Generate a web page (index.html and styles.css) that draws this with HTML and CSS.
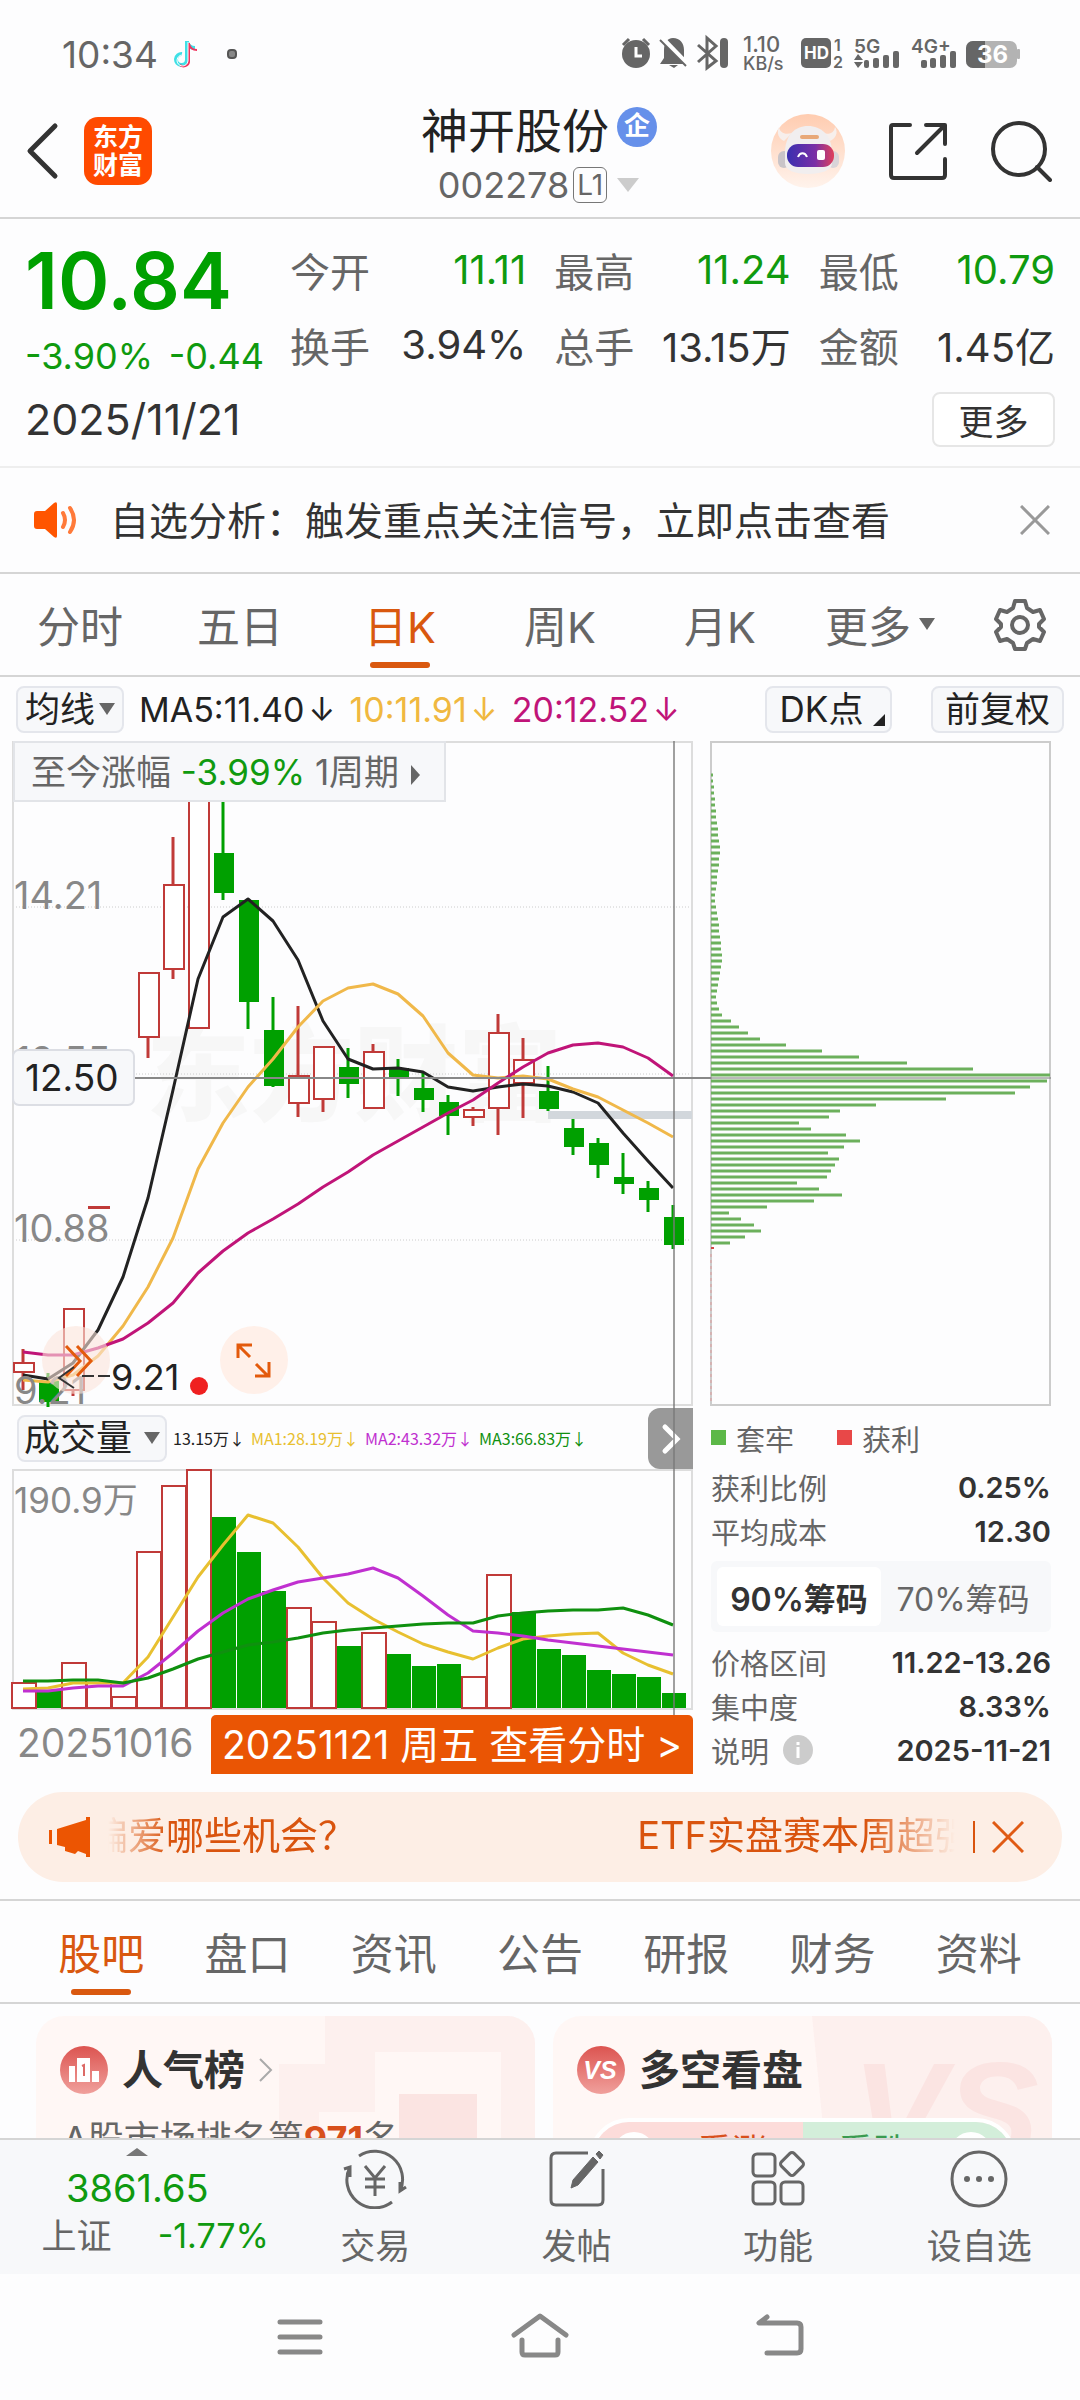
FILE: index.html
```html
<!DOCTYPE html>
<html lang="zh-CN">
<head>
<meta charset="utf-8">
<meta name="viewport" content="width=device-width">
<title>神开股份 002278</title>
<link rel="stylesheet" href="styles.css">
</head>
<body>
<div class="app">
  <div class="status">
    <span class="clock">10:34</span>
    <svg class="tiktok" viewBox="0 0 24 30" width="24" height="30" fill="none" stroke-width="4">
      <path d="M13 2v19a5.500 5.500 0 1 1-5-6M13 3c1 4 4 6 8 6" stroke="#3ee0e6"/>
      <path d="M15 4v19a5.500 5.500 0 0 1-9 3M15 5c1 4 4 6 8 6" stroke="#f0355f" stroke-width="2"/>
      <path d="M14 3v19a5.500 5.500 0 1 1-5-6" stroke="#fff" stroke-width="1"/>
    </svg>
    <svg class="dot" viewBox="0 0 10 10" width="10" height="10"><rect x="1" y="1" width="8" height="8" rx="3" fill="#888" stroke="#555" stroke-width="2"/></svg>
    <svg class="signals" viewBox="620 34 402 42" width="402" height="42" fill="#666">
      <circle cx="636" cy="55" r="14"/><path d="M623 46l6-6M643 40l6 6" stroke="#666" stroke-width="3"/><path d="M636 48v9h6" stroke="#fff" stroke-width="3" fill="none"/>
      <path d="M673 39c7 0 11 5 11 12v8l4 6h-28l4-6v-8c0-7 3-12 9-12zM669 66h9l-4 3z"/>
      <path d="M662 39l27 28" stroke="#fff" stroke-width="5"/><path d="M660 41l26 26" stroke="#666" stroke-width="2"/>
      <path d="M698 46l18 16-9 7V39l9 8-18 16" fill="none" stroke="#666" stroke-width="3"/><rect x="720" y="39" width="8" height="30" rx="4"/>
      <text x="743" y="53" font-size="22" font-weight="500">1.10</text><text x="743" y="71" font-size="18" font-weight="500">KB/s</text>
      <rect x="801" y="39" width="30" height="30" rx="5"/><text x="804" y="60" font-size="17" font-weight="700" fill="#fff">HD</text>
      <text x="834" y="52" font-size="16" font-weight="600">1</text><text x="833" y="69" font-size="16" font-weight="600">2</text>
      <text x="854" y="54" font-size="19" font-weight="600">5G</text><text x="911" y="54" font-size="19" font-weight="600">4G+</text>
      <path d="M854 61l4-6 5 6zM854 63l4 6 5-6z"/>
      <g><rect x="864" y="61" width="5" height="8" rx="2"/><rect x="873" y="59" width="6" height="10" rx="2"/><rect x="883" y="56" width="6" height="13" rx="2"/><rect x="893" y="52" width="6" height="17" rx="2"/></g>
      <g><rect x="921" y="61" width="6" height="8" rx="2"/><rect x="930" y="59" width="6" height="10" rx="2"/><rect x="940" y="56" width="6" height="13" rx="2"/><rect x="950" y="52" width="6" height="17" rx="2"/></g>
      <rect x="966" y="42" width="51" height="27" rx="7" fill="#b3b3b3"/><path d="M985 42v27h-12a7 7 0 0 1-7-7V49a7 7 0 0 1 7-7z"/><rect x="1017" y="50" width="3" height="10" rx="1" fill="#b3b3b3"/>
      <text x="977" y="64" font-size="24" font-weight="700" fill="#fff">36</text>
    </svg>
  </div>

  <header class="header">
    <div class="header-left">
      <button class="icon-btn" aria-label="返回"><svg viewBox="0 0 34 60" width="34" height="60" fill="none" stroke="#333" stroke-width="5" stroke-linecap="round" stroke-linejoin="round"><path d="M29 5L4 30l25 25"/></svg></button>
      <a class="logo" href="#home"><span>东方</span><span>财富</span></a>
    </div>
    <div class="title">
      <h1>神开股份 <span class="badge">企</span></h1>
      <p class="code">002278 <span class="level">L1</span><svg viewBox="0 0 24 16" width="24" height="16"><path d="M1 1h22L12 15z" fill="#ccc"/></svg></p>
    </div>
    <div class="header-right">
      <button class="icon-btn" aria-label="智能助手">
        <svg viewBox="0 0 76 76" width="76" height="76">
          <defs>
            <linearGradient id="halo" x2="0" y2="1"><stop stop-color="#ffccb0"/><stop offset="1" stop-color="#fff3ec"/></linearGradient>
            <linearGradient id="visor"><stop stop-color="#3a30b0"/><stop offset=".6" stop-color="#7a2fa6"/><stop offset="1" stop-color="#e0405a"/></linearGradient>
          </defs>
          <circle cx="38" cy="38" r="37" fill="url(#halo)"/>
          <path d="M9 14c-3 6 0 12 5 14l8-8c-7 2-12 0-13-6zM65 14c4 6 0 12-5 14l-8-8c8 2 12 0 13-6z" fill="#f7efec"/>
          <rect x="8" y="38" width="12" height="17" rx="6" fill="#c9c4c8"/><rect x="57" y="38" width="12" height="17" rx="6" fill="#d9d4d8"/>
          <path d="M15 40c0-18 10-27 23-27s24 9 24 27v10c0 7-10 11-24 11s-23-4-23-11z" fill="#f1eeef"/>
          <rect x="17" y="31" width="47" height="23" rx="11" fill="url(#visor)"/><rect x="30" y="22" width="19" height="4" rx="2" fill="#e8a878"/>
          <path d="M28 44c2-5 7-5 9 0" fill="none" stroke="#fff" stroke-width="2"/><rect x="47" y="37" width="8" height="10" rx="2" fill="#fff"/>
        </svg>
      </button>
      <button class="icon-btn" aria-label="分享"><svg viewBox="0 0 60 60" width="60" height="60" fill="none" stroke="#333" stroke-width="4" stroke-linecap="round" stroke-linejoin="round"><path d="M22 4H5q-2 0-2 2v48q0 3 3 3h48q3 0 3-3V38M38 4h19v19M56 5L29 32"/></svg></button>
      <button class="icon-btn" aria-label="搜索"><svg viewBox="0 0 62 62" width="62" height="62" fill="none" stroke="#333" stroke-width="4" stroke-linecap="round"><circle cx="29" cy="29" r="26"/><path d="M47 47l13 13"/></svg></button>
    </div>
  </header>

  <main class="content">
    <section class="quote">
      <div class="quote-grid">
        <div>
          <div class="price">10.84</div>
          <div class="change"><span>-3.90%</span><span>-0.44</span></div>
        </div>
        <dl class="stats">
          <div><dt>今开</dt><dd class="down">11.11</dd></div>
          <div><dt>最高</dt><dd class="down">11.24</dd></div>
          <div><dt>最低</dt><dd class="down">10.79</dd></div>
          <div><dt>换手</dt><dd>3.94%</dd></div>
          <div><dt>总手</dt><dd>13.15万</dd></div>
          <div><dt>金额</dt><dd>1.45亿</dd></div>
        </dl>
      </div>
      <div class="quote-foot"><time>2025/11/21</time><button class="more">更多</button></div>
    </section>

    <section class="notice">
      <svg viewBox="0 0 46 38" width="46" height="38" fill="#ff5500"><path d="M1 13q0-3 3-3h8L21 2q3-2 3 1v32q0 3-3 1l-9-8H4q-3 0-3-3z"/><path d="M30 12q4 7 0 14M37 7q8 12 0 24" fill="none" stroke="#ff7a3a" stroke-width="4" stroke-linecap="round"/></svg>
      <p>自选分析：触发重点关注信号，立即点击查看</p>
      <button class="icon-btn" aria-label="关闭"><svg viewBox="0 0 30 30" width="30" height="30" stroke="#999" stroke-width="3"><path d="M1 1l28 28M29 1L1 29"/></svg></button>
    </section>

    <nav class="periods">
      <a href="#minute">分时</a><a href="#five">五日</a><a class="active" href="#day">日K</a><a href="#week">周K</a><a href="#month">月K</a><a href="#more">更多<i class="caret"></i></a>
      <button class="icon-btn" aria-label="设置"><svg viewBox="0 0 54 54" width="54" height="54" fill="none" stroke="#666" stroke-width="4" stroke-linejoin="round"><path d="M22 3h10l2 7 6 4 7-2 4 9-5 5v3l5 5-4 9-7-2-6 4-2 6H22l-2-6-6-4-7 2-4-9 5-5v-3l-5-5 4-9 7 2 6-4z"/><circle cx="27" cy="27" r="8"/></svg></button>
    </nav>

    <div class="toolbar">
      <button class="chip">均线<i class="caret"></i></button>
      <span class="ma">MA5:11.40<b>↓</b></span><span class="ma gold">10:11.91<b>↓</b></span><span class="ma rose">20:12.52<b>↓</b></span>
      <button class="chip dk">DK点<i class="corner"></i></button>
      <button class="chip wide">前复权</button>
    </div>

    <section class="charts">
      <div class="chart-col">
        <div class="kline">
          <svg viewBox="13 741 680 665" role="img" aria-label="日K线">
            <text x="146" y="1113" font-size="104" font-weight="900" fill="#f7f7f7">东方财富</text>
            <path d="M13 907h679M13 1074h679M13 1240h679" stroke="#ccc" stroke-dasharray="1 2"/>
            <rect x="13" y="742" width="679" height="663" fill="none" stroke="#ddd" stroke-width="2"/>
            <path d="M548 1115h144" stroke="#d2d7dc" stroke-width="8"/>
            <text class="axis" x="15" y="1074">12.55</text>
            <g id="candles"></g>
            <g id="averages" class="lines"></g>
            <text class="axis" x="14" y="909">14.21</text>
            <text class="axis" x="14" y="1242">10.88</text>
            <text class="axis" x="14" y="1404">9.21</text>
            <circle cx="76" cy="1360" r="34" fill="#fbe5da" opacity=".6"/><circle cx="254" cy="1360" r="34" fill="#fff0e9"/>
            <path d="M66 1346l14 15-14 15M77 1346l14 15-14 15" fill="none" stroke="#e35a0c" stroke-width="3"/>
            <path d="M74 1388l-15-10 15-11M82 1376h12M98 1376h12" fill="none" stroke="#333" stroke-width="2"/>
            <text x="111" y="1390" font-size="36" fill="#222">9.21</text>
            <circle cx="199" cy="1386" r="9" fill="#ef2020"/>
            <path d="M250 1357l-12-12M238 1358v-13h14M256 1364l12 12M269 1362v14h-14" fill="none" stroke="#e35a0c" stroke-width="3"/>
            <path d="M134 1078h577" stroke="#888" stroke-width="2"/>
            <rect x="13" y="1050" width="121" height="55" rx="6" fill="#f7f8fa" stroke="#dcdee4" stroke-width="2"/>
            <text x="25" y="1091" font-size="37" fill="#222">12.50</text>
          </svg>
          <button class="range">至今涨幅 <span class="down">-3.99%</span> 1周期<i></i></button>
        </div>
        <div class="vol-head">
          <button class="chip vol">成交量<i class="caret"></i></button>
          <span>13.15万↓</span><span class="c1">MA1:28.19万↓</span><span class="c2">MA2:43.32万↓</span><span class="c3">MA3:66.83万↓</span>
          <button class="side" aria-label="收起"><svg viewBox="0 0 20 32" width="20" height="32" fill="none" stroke="#fff" stroke-width="5" stroke-linecap="round"><path d="M4 4l12 12L4 28"/></svg></button>
        </div>
        <svg viewBox="13 1470 680 239" role="img" aria-label="成交量">
          <rect x="13" y="1470" width="679" height="239" fill="none" stroke="#ddd" stroke-width="2"/>
          <g id="volumes"></g>
          <g id="volume-averages" class="lines"></g>
          <text x="14" y="1513" font-size="35" fill="#888">190.9万</text>
        </svg>
        <div class="dates"><span>20251016</span><button>20251121 周五 查看分时 &gt;</button></div>
        <i class="crosshair"></i>
      </div>

      <div class="chip-col">
        <svg viewBox="711 741 340 665" role="img" aria-label="筹码分布">
          <rect x="711" y="742" width="339" height="663" fill="none" stroke="#ccc" stroke-width="2"/>
          <path id="chips" stroke="#6cb05c" stroke-width="3"/>
          <path d="M711 1248h3" stroke="#d04848" stroke-width="2"/><path d="M711 1254v150" stroke="#d99" stroke-dasharray="3 3"/>
          <path d="M711 1078h340" stroke="#777"/>
        </svg>
        <div class="legend"><span class="green">套牢</span><span class="red">获利</span></div>
        <dl class="facts"><div><dt>获利比例</dt><dd>0.25%</dd></div><div><dt>平均成本</dt><dd>12.30</dd></div></dl>
        <div class="segment"><button class="on">90%筹码</button><button>70%筹码</button></div>
        <dl class="facts"><div><dt>价格区间</dt><dd>11.22-13.26</dd></div><div><dt>集中度</dt><dd>8.33%</dd></div><div><dt>说明 <svg viewBox="0 0 30 30" width="30" height="30"><circle cx="15" cy="15" r="15" fill="#ccc"/><path d="M15 12v11M15 7v3" stroke="#fff" stroke-width="3"/></svg></dt><dd>2025-11-21</dd></div></dl>
      </div>
    </section>

    <section class="promo">
      <svg viewBox="0 0 46 40" width="46" height="40" fill="#ec5502"><path d="M1 13h3v14H1zM9 12L38 3V0h4v40h-4v-3l-8-3-3 3-10-3v-4l-8-2z"/></svg>
      <div class="marquee"><span>偏爱哪些机会？</span><span>ETF实盘赛本周超强</span></div>
      <button class="icon-btn" aria-label="关闭"><svg viewBox="0 0 32 32" width="32" height="32" stroke="#e05a14" stroke-width="3"><path d="M1 1l30 30M31 1L1 31"/></svg></button>
    </section>

    <nav class="sections">
      <a class="active" href="#bar">股吧</a><a href="#panel">盘口</a><a href="#news">资讯</a><a href="#notice">公告</a><a href="#report">研报</a><a href="#finance">财务</a><a href="#info">资料</a>
    </nav>

    <section class="cards">
      <article class="card">
        <svg class="card-art" viewBox="0 0 300 200" width="300" height="200"><path d="M90 0h210v200H266V36H140v60H84v104H44V48h46z" fill="#fdeeec" opacity=".8"/><path d="M164 78h78v122h-78z" fill="#fbe4e2"/></svg>
        <h2><svg viewBox="0 0 48 48" width="48" height="48"><defs><linearGradient id="red" x2="0" y2="1"><stop stop-color="#dc5450"/><stop offset="1" stop-color="#f0a09c"/></linearGradient></defs><circle cx="24" cy="24" r="24" fill="url(#red)"/><path d="M9 20h6v16H9zM17 12h13v24H17zM32 25h7v11h-7z" fill="#fff"/><path d="M22 20l2-1v11" fill="none" stroke="#dc6a66" stroke-width="2"/></svg>人气榜<svg viewBox="0 0 14 24" width="14" height="24" fill="none" stroke="#aaa" stroke-width="2"><path d="M1 1l11 11L1 23"/></svg></h2>
        <p>A股市场排名第<b>971</b>名</p>
      </article>
      <article class="card">
        <svg class="card-art" viewBox="0 0 300 200" width="300" height="200"><path d="M60 0h240v200H80z" fill="#fdeeec" opacity=".8"/><text class="versus" x="100" y="144" font-size="140" fill="#fbe4e2">VS</text></svg>
        <h2><svg viewBox="0 0 48 48" width="48" height="48"><circle cx="24" cy="24" r="24" fill="url(#red)"/><text class="versus" x="23" y="33" font-size="25" text-anchor="middle" fill="#fff">VS</text></svg>多空看盘</h2>
        <div class="vote"><button class="up">看涨</button><button class="dn">看跌</button></div>
      </article>
    </section>
  </main>

  <footer class="tabbar">
    <a class="index" href="#sh"><i></i><strong>3861.65</strong><span>上证 <em>-1.77%</em></span></a>
    <a href="#trade"><svg viewBox="0 0 64 60" width="64" height="60" fill="none" stroke="#666" stroke-width="3"><path d="M16 7a28 28 0 0 1 41 35M49 53A28 28 0 0 1 7 18M1 20l6-2v10M63 38l-6 4v-9M22 17l10 12 10-12M32 29v18M22 30h20M22 38h20"/></svg>交易</a>
    <a href="#post"><svg viewBox="0 0 60 60" width="60" height="60" fill="none" stroke="#666" stroke-width="3"><path d="M41 4H9q-5 0-5 5v42q0 5 5 5h42q5 0 5-5V20"/><path d="M24 39l2-8L46 8l5 5-20 23zM49 5l3-3 4 4-3 4z" fill="#666" stroke-width="1"/></svg>发帖</a>
    <a href="#features"><svg viewBox="0 0 60 60" width="60" height="60" fill="none" stroke="#666" stroke-width="3"><rect x="5" y="5" width="22" height="22" rx="4"/><rect x="5" y="33" width="22" height="22" rx="4"/><rect x="33" y="33" width="22" height="22" rx="4"/><rect x="35" y="6" width="18" height="18" rx="3" transform="rotate(45 44 15)"/></svg>功能</a>
    <a href="#watch"><svg viewBox="0 0 60 60" width="60" height="60" fill="none" stroke="#666" stroke-width="3"><circle cx="30" cy="30" r="27"/><g fill="#666" stroke="none"><circle cx="18" cy="30" r="3"/><circle cx="30" cy="30" r="3"/><circle cx="42" cy="30" r="3"/></g></svg>设自选</a>
  </footer>
  <nav class="system">
    <button class="icon-btn" aria-label="菜单"><svg viewBox="0 0 60 48" width="60" height="48" stroke="#888" stroke-width="5" stroke-linecap="round"><path d="M10 9h40M10 24h40M10 39h40"/></svg></button>
    <button class="icon-btn" aria-label="主页"><svg viewBox="0 0 60 48" width="60" height="48" fill="none" stroke="#888" stroke-width="5" stroke-linecap="round" stroke-linejoin="round"><path d="M4 22L30 3l26 19M12 27v12q0 3 3 3h30q3 0 3-3V27"/></svg></button>
    <button class="icon-btn" aria-label="后退"><svg viewBox="0 0 60 48" width="60" height="48" fill="none" stroke="#888" stroke-width="5" stroke-linecap="round" stroke-linejoin="round"><path d="M17 4l-8 6h38q4 0 4 4v22q0 4-4 4H17"/></svg></button>
  </nav>
</div>
<script src="charts.js"></script>
</body>
</html>
```
FILE: styles.css
```css
* { box-sizing: border-box; margin: 0; padding: 0; }
body, button { font-family: Inter, "Noto Sans CJK SC", sans-serif; }
body { background: #fdfdfe; color: #333; font-size: 36px; }
button { border: 0; background: none; color: inherit; font-size: inherit; }
a { color: inherit; text-decoration: none; }
svg { display: block; flex: none; }
i, em { font-style: normal; }
.app { display: flex; flex-direction: column; height: 100vh; overflow: hidden; white-space: nowrap; }
.icon-btn { display: grid; place-items: center; }
.down { color: #0f9a0f; }

.status { display: flex; align-items: center; height: 100px; padding: 8px 58px 0 62px; color: #666; }
.clock { font-size: 37px; }
.tiktok { margin-left: 16px; }
.dot { margin-left: 29px; }
.signals { margin-left: auto; }

.header { display: grid; grid-template-columns: 1fr auto 1fr; align-items: start; height: 119px; padding: 0 28px 0 26px; border-bottom: 2px solid #d5d5d5; }
.header-left, .header-right { display: flex; align-items: center; height: 102px; }
.header-left { gap: 24px; }
.header-right { justify-content: flex-end; gap: 42px; }
.logo { display: flex; flex-direction: column; justify-content: center; align-items: center; width: 68px; height: 68px; border-radius: 14px; background: #ff4a00; color: #fff; font-size: 25px; font-weight: 700; line-height: 28px; }
.title h1 { display: flex; align-items: center; gap: 8px; height: 54px; font-size: 47px; font-weight: 400; color: #222; }
.badge { width: 40px; height: 40px; border-radius: 20px; background: #6690ea; color: #fff; font-size: 26px; font-weight: 700; line-height: 38px; text-align: center; }
.code { display: flex; align-items: center; justify-content: center; gap: 4px; height: 62px; font-size: 36px; color: #666; }
.level { height: 36px; padding: 0 3px; border: 1px solid #777; border-radius: 6px; font-size: 28px; line-height: 34px; }
.code svg { margin-left: 5px; }

.content { flex: 1; min-height: 0; overflow: hidden; }
.quote { padding: 13px 25px 0; border-bottom: 2px solid #eee; }
.quote-grid { display: grid; grid-template-columns: 250px 1fr; gap: 15px; }
.price { color: #00a000; font-size: 78px; font-weight: 600; line-height: 98px; }
.change { display: flex; justify-content: space-between; padding-right: 11px; color: #0f9a0f; font-size: 36px; line-height: 52px; }
.stats { display: grid; grid-template-columns: repeat(3, 1fr); column-gap: 28px; }
.stats div { display: flex; justify-content: space-between; align-items: center; height: 75px; }
.stats dt { color: #666; font-size: 40px; }
.stats dd { font-size: 40px; }
.quote-foot { display: flex; justify-content: space-between; align-items: center; height: 84px; padding-bottom: 10px; }
.quote-foot time { font-size: 43px; }
.more { width: 123px; height: 55px; border: 2px solid #e6e6e6; border-radius: 8px; background: #fff; font-size: 35px; }

.notice { display: flex; align-items: center; height: 106px; padding: 0 30px 0 33px; border-bottom: 2px solid #d5d5d5; font-size: 39px; }
.notice p { flex: 1; padding: 0 0 4px 31px; }

.periods { display: grid; grid-template-columns: repeat(6, 4fr) 3fr; height: 103px; border-bottom: 2px solid #d5d5d5; color: #666; font-size: 43px; }
.periods a, .sections a { display: grid; grid-auto-flow: column; place-content: center; align-items: center; gap: 8px; position: relative; padding-bottom: 2px; }
.caret { display: inline-block; border: 8px solid transparent; border-top: 12px solid #666; border-bottom: 0; }
.active { color: #d9580f; }
.active::after { content: ""; position: absolute; left: 50%; bottom: 7px; width: 60px; height: 6px; margin-left: -30px; border-radius: 3px; background: #d9580f; }

.toolbar { display: flex; align-items: center; height: 64px; padding: 0 16px; }
.chip { display: flex; align-items: center; justify-content: center; gap: 4px; height: 47px; border: 2px solid #e4e6ec; border-radius: 8px; background: #f7f8fa; color: #222; font-size: 35px; line-height: 40px; }
.toolbar .chip:first-child { width: 108px; }
.ma { display: flex; align-items: center; gap: 4px; margin-left: 15px; color: #222; font-size: 34px; }
.ma b { width: 26px; font-size: 32px; font-weight: 400; text-align: center; }
.ma.gold { color: #f0b840; }
.ma.rose { color: #c01478; }
.toolbar .dk { position: relative; width: 127px; margin-left: auto; padding-right: 14px; }
.corner { position: absolute; right: 5px; bottom: 5px; border: 6px solid #222; border-top-color: transparent; border-left-color: transparent; }
.toolbar .wide { width: 133px; margin-left: 39px; }

.charts { display: grid; grid-template-columns: 2fr 1fr; gap: 18px; padding: 0 29px 0 13px; }
.charts > div > svg, .kline svg { width: 100%; height: auto; overflow: visible; }
.charts text { font-family: Inter, "Noto Sans CJK SC", sans-serif; }
.axis { fill: #888; font-size: 38px; }
.lines { fill: none; stroke-width: 3; stroke-linejoin: round; }
.chart-col, .kline { position: relative; min-width: 0; }
.range { position: absolute; left: 0; top: 0; width: 433px; height: 61px; padding: 0 0 4px 16px; border: 2px solid #e2e4e8; background: #f7f8fa; color: #666; font-size: 35px; text-align: left; }
.range i { display: inline-block; margin-left: 12px; border: 10px solid transparent; border-left: 9px solid #666; border-right: 0; }
.vol-head { position: relative; display: flex; align-items: center; gap: 6px; height: 64px; padding-left: 4px; color: #222; font-family: "Liberation Sans Narrow", "Noto Sans CJK SC", sans-serif; font-size: 16px; }
.vol { width: 150px; gap: 12px; font-size: 36px; }
.c1 { color: #e8c030; }
.c2 { color: #c030d0; }
.c3 { color: #0f900f; }
.side { position: absolute; right: 0; top: 2px; display: grid; place-items: center; width: 45px; height: 61px; border-radius: 12px 0 0 12px; background: #999; }
.dates { display: flex; justify-content: space-between; align-items: center; height: 65px; padding-top: 6px; color: #888; font-size: 39px; }
.dates span { padding: 0 0 4px 4px; }
.dates button { position: relative; z-index: 1; width: 482px; height: 59px; border-radius: 5px 5px 0 0; background: #ea5504; color: #fff; font-size: 39px; line-height: 56px; }
.crosshair { position: absolute; left: 97%; top: 0; bottom: 59px; width: 2px; background: #777; opacity: .7; }

.legend { display: flex; gap: 43px; align-items: center; height: 59px; color: #666; font-size: 29px; padding-top: 4px; }
.legend span { display: flex; align-items: center; gap: 10px; }
.legend span::before { content: ""; width: 15px; height: 15px; background: #5cb848; }
.legend .red::before { background: #e84848; }
.facts div { display: flex; justify-content: space-between; align-items: center; height: 44px; }
.facts dt { display: flex; align-items: center; gap: 14px; color: #666; font-size: 29px; }
.facts dd { font-size: 29px; font-weight: 600; }
.segment { display: grid; grid-template-columns: 1fr 1fr; height: 71px; margin: 8px 0; padding: 6px; border-radius: 6px; background: #f7f8fa; color: #666; font-size: 32px; }
.segment .on { border-radius: 6px; background: #fff; color: #333; font-weight: 600; }

.promo { display: flex; align-items: center; height: 90px; margin: 18px 18px 17px; padding: 0 38px 0 30px; border-radius: 45px; background: #fdeee5; color: #d9540e; font-size: 38px; line-height: 86px; }
.marquee { display: flex; flex: 1; min-width: 0; justify-content: space-between; overflow: hidden; margin-left: 14px; padding-bottom: 4px; mask-image: linear-gradient(90deg, transparent, #000 60px, #000 calc(100% - 90px), transparent); }
.marquee span:first-child { margin-left: -18px; }
.marquee span:last-child { margin-right: -18px; }
.promo button { margin-left: 18px; padding-left: 17px; border-left: 2px solid #d9540e; }

.sections { display: grid; grid-template-columns: repeat(7, 1fr); height: 105px; padding: 0 28px; border-top: 2px solid #d5d5d5; border-bottom: 2px solid #d5d5d5; color: #666; font-size: 43px; }
.cards { display: grid; grid-template-columns: 1fr 1fr; gap: 18px; padding: 12px 28px 0 36px; }
.card { position: relative; height: 240px; padding: 28px 24px; border-radius: 28px; overflow: hidden; background: #fff7f5; color: #666; font-size: 36px; }
.card-art { position: absolute; right: 0; top: 0; }
.versus { font-family: "Liberation Sans", sans-serif; font-style: italic; font-weight: 700; }
.card h2 { position: relative; display: flex; align-items: center; gap: 14px; height: 52px; color: #333; font-size: 41px; font-weight: 700; line-height: 48px; }
.card p { position: relative; padding: 14px 3px; }
.card b { color: #d8501c; }
.vote { position: relative; display: flex; height: 80px; margin: 22px 12px 0; border: 4px solid #fff; border-radius: 44px; overflow: hidden; }
.vote button { display: flex; flex: 1; align-items: flex-start; gap: 42px; padding: 10px 20px; font-size: 35px; line-height: 38px; }
.vote button::before { content: ""; width: 42px; height: 42px; border-radius: 21px; background: #fff; }
.up { background: #fcdcda; color: #d8501c; }
.vote .dn { flex-direction: row-reverse; background: #d3eeda; color: #3a9a50; }

.tabbar { display: grid; grid-template-columns: 15fr 11fr 11fr 11fr 11fr; height: 136px; border-top: 2px solid #d5d5d5; background: #f7f8fa; color: #666; font-size: 35px; }
.tabbar a { display: flex; flex-direction: column; align-items: center; padding-top: 9px; line-height: 48px; gap: 13px; }
.tabbar .index { gap: 0; padding-top: 8px; }
.index i { border: 11px solid transparent; border-bottom: 8px solid #777; border-top: 0; }
.index strong { padding-top: 8px; color: #0f9a0f; font-weight: 400; font-size: 38px; }
.index span { display: flex; gap: 46px; padding-left: 36px; }
.index em { color: #0f9a0f; font-size: 34px; }
.system { display: flex; justify-content: center; gap: 180px; height: 126px; background: #fdfdfe; }
```
FILE: charts.js
```js
// Geometry shares one coordinate space: a trading day every 25 units.
const FIRST_DAY = 23, STEP = 25;
const dayX = i => FIRST_DAY + i * STEP;
const RED = '#c03a38', GREEN = '#00a000';

// day, rising, high, body top, body bottom, low
const candles = [
  [0,1,1349,1363,1372,1390],[1,0,1373,1381,1402,1407],[2,1,1309,1309,1390,1396],[3,1,1207,1207,1208,1208],
  [5,1,973,973,1037,1058],[6,1,837,885,969,979],[7,1,780,780,1028,1028],[8,0,780,853,893,900],
  [9,0,900,900,1002,1029],[10,0,997,1030,1086,1087],[11,1,1006,1076,1103,1117],[12,1,1047,1047,1099,1112],
  [13,0,1048,1067,1084,1098],[14,1,1044,1052,1108,1108],[15,0,1059,1068,1078,1096],[16,0,1073,1088,1100,1112],
  [17,0,1095,1102,1116,1135],[18,1,1107,1110,1117,1126],[19,1,1014,1033,1108,1135],[20,1,1038,1060,1083,1118],
  [21,0,1066,1091,1109,1111],[22,0,1119,1128,1147,1155],[23,0,1138,1143,1165,1178],[24,0,1153,1177,1184,1194],
  [25,0,1181,1188,1200,1212],[26,0,1205,1217,1245,1249]
];
document.getElementById('candles').innerHTML = candles.map(([i, up, high, top, bottom, low]) => {
  const x = dayX(i), color = up ? RED : GREEN;
  return `<path d="M${x} ${high}V${top}M${x} ${bottom}V${low}" stroke="${color}" stroke-width="3"/>` +
    `<rect x="${x - 9}" y="${top}" width="20" height="${bottom - top}" fill="${up ? '#fff' : color}" stroke="${color}" stroke-width="${up ? 2 : 0}"/>`;
}).join('');

const line = (values, color) =>
  `<polyline points="${values.map((y, i) => dayX(i) + ',' + y).join(' ')}" stroke="${color}"/>`;

document.getElementById('averages').innerHTML =
  line([1375,1379,1363,1330,1277,1198,1090,979,917,899,921,960,1021,1059,1069,1068,1072,1087,1091,1087,1084,1086,1092,1103,1133,1161,1188], '#222') +
  line([1380,1382,1375,1356,1326,1287,1238,1169,1123,1087,1059,1027,1001,988,984,994,1016,1053,1075,1078,1076,1079,1089,1097,1110,1123,1137], '#f0b84a') +
  line([1352,1355,1355,1348,1339,1323,1303,1273,1251,1233,1219,1204,1187,1172,1155,1141,1127,1113,1100,1083,1067,1053,1045,1043,1047,1058,1076], '#c01478');

const BASE = 1708;
const tops = [1683,1691,1663,1683,1697,1552,1486,1470,1517,1552,1591,1608,1622,1646,1633,1654,1666,1664,1677,1575,1612,1649,1655,1670,1674,1677,1693];
const falling = new Set([1,8,9,10,13,15,16,17,20,21,22,23,24,25,26]);
document.getElementById('volumes').innerHTML = tops.map((y, i) => {
  const x = dayX(i) - 11, down = falling.has(i);
  return `<rect x="${x}" y="${y}" width="24" height="${BASE - y}" fill="${down ? GREEN : '#fff'}" stroke="${RED}" stroke-width="${down ? 0 : 2}"/>`;
}).join('');
document.getElementById('volume-averages').innerHTML =
  line([1689,1688,1683,1683,1683,1657,1617,1577,1545,1515,1523,1547,1578,1603,1619,1632,1644,1652,1659,1648,1639,1636,1634,1633,1653,1665,1674], '#e8c030') +
  line([1691,1691,1688,1686,1686,1673,1653,1631,1613,1599,1590,1582,1578,1574,1568,1578,1596,1615,1631,1633,1636,1640,1643,1646,1649,1652,1655], '#c030d0') +
  line([1681,1681,1680,1680,1683,1678,1669,1659,1652,1645,1642,1638,1633,1630,1628,1626,1624,1623,1623,1616,1613,1611,1610,1610,1608,1615,1625], '#0f900f');

// Holding distribution by price level, top to bottom.
const chips = [2,2,3,3,4,4,5,5,6,7,7,8,9,9,8,8,7,6,6,5,4,4,5,6,7,8,8,9,10,10,11,11,10,9,8,7,6,5,6,8,11,20,28,37,49,75,111,148,196,262,339,336,319,304,235,165,129,118,88,100,135,149,133,117,128,124,120,116,86,108,131,103,56,18,30,43,50,34,19];
document.getElementById('chips').setAttribute('d', chips.map((w, i) => `M711 ${775 + i * 6}h${w}`).join(''));
```
